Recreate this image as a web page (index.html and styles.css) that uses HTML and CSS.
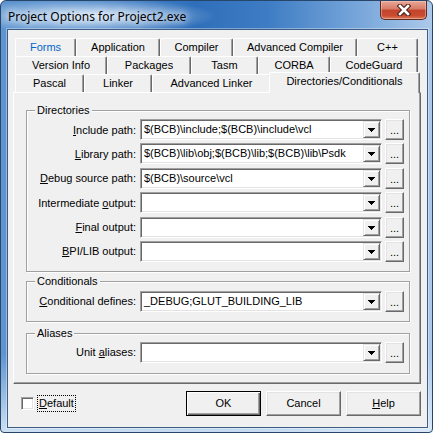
FILE: index.html
```html
<!DOCTYPE html>
<html>
<head>
<meta charset="utf-8">
<link rel="stylesheet" href="styles.css">
</head>
<body>
<div class="window">
  <div class="titlebar">
    <span class="title">Project Options for Project2.exe</span>
    <div class="close">
      <svg width="14" height="12" viewBox="0 0 14 12">
        <path d="M3 2 L11 10 M11 2 L3 10" stroke="#4a1c14" stroke-width="4.6" stroke-linecap="square" fill="none"/>
        <path d="M3 2 L11 10 M11 2 L3 10" stroke="#ffffff" stroke-width="2.6" stroke-linecap="square" fill="none"/>
      </svg>
    </div>
  </div>
  <div class="client">
    <div class="tabs">
      <div class="tabrow r1">
        <div class="tab hot">Forms</div>
        <div class="tab">Application</div>
        <div class="tab">Compiler</div>
        <div class="tab">Advanced Compiler</div>
        <div class="tab">C++</div>
      </div>
      <div class="tabrow r2">
        <div class="tab">Version Info</div>
        <div class="tab">Packages</div>
        <div class="tab">Tasm</div>
        <div class="tab">CORBA</div>
        <div class="tab">CodeGuard</div>
      </div>
      <div class="tabrow r3">
        <div class="tab">Pascal</div>
        <div class="tab">Linker</div>
        <div class="tab">Advanced Linker</div>
        <div class="tab sel">Directories/Conditionals</div>
      </div>
    </div>
    <div class="page">
      <div class="group">
        <div class="group-title">Directories</div>
        <div class="fields">
          <div class="field">
            <label><u>I</u>nclude path:</label>
            <div class="combo"><span class="val">$(BCB)\include;$(BCB)\include\vcl</span><span class="drop"><svg width="7" height="4" viewBox="0 0 7 4"><path d="M0 0h7v1h-1v1h-1v1h-1v1h-1v-1h-1v-1h-1v-1h-1z" fill="#000"/></svg></span></div>
            <div class="ell">...</div>
          </div>
          <div class="field">
            <label><u>L</u>ibrary path:</label>
            <div class="combo"><span class="val">$(BCB)\lib\obj;$(BCB)\lib;$(BCB)\lib\Psdk</span><span class="drop"><svg width="7" height="4" viewBox="0 0 7 4"><path d="M0 0h7v1h-1v1h-1v1h-1v1h-1v-1h-1v-1h-1v-1h-1z" fill="#000"/></svg></span></div>
            <div class="ell">...</div>
          </div>
          <div class="field">
            <label><u>D</u>ebug source path:</label>
            <div class="combo"><span class="val">$(BCB)\source\vcl</span><span class="drop"><svg width="7" height="4" viewBox="0 0 7 4"><path d="M0 0h7v1h-1v1h-1v1h-1v1h-1v-1h-1v-1h-1v-1h-1z" fill="#000"/></svg></span></div>
            <div class="ell">...</div>
          </div>
          <div class="field">
            <label>Intermediate <u>o</u>utput:</label>
            <div class="combo"><span class="val"></span><span class="drop"><svg width="7" height="4" viewBox="0 0 7 4"><path d="M0 0h7v1h-1v1h-1v1h-1v1h-1v-1h-1v-1h-1v-1h-1z" fill="#000"/></svg></span></div>
            <div class="ell">...</div>
          </div>
          <div class="field">
            <label><u>F</u>inal output:</label>
            <div class="combo"><span class="val"></span><span class="drop"><svg width="7" height="4" viewBox="0 0 7 4"><path d="M0 0h7v1h-1v1h-1v1h-1v1h-1v-1h-1v-1h-1v-1h-1z" fill="#000"/></svg></span></div>
            <div class="ell">...</div>
          </div>
          <div class="field">
            <label><u>B</u>PI/LIB output:</label>
            <div class="combo"><span class="val"></span><span class="drop"><svg width="7" height="4" viewBox="0 0 7 4"><path d="M0 0h7v1h-1v1h-1v1h-1v1h-1v-1h-1v-1h-1v-1h-1z" fill="#000"/></svg></span></div>
            <div class="ell">...</div>
          </div>
        </div>
      </div>
      <div class="group group-cond">
        <div class="group-title">Conditionals</div>
        <div class="fields">
          <div class="field">
            <label><u>C</u>onditional defines:</label>
            <div class="combo"><span class="val">_DEBUG;GLUT_BUILDING_LIB</span><span class="drop"><svg width="7" height="4" viewBox="0 0 7 4"><path d="M0 0h7v1h-1v1h-1v1h-1v1h-1v-1h-1v-1h-1v-1h-1z" fill="#000"/></svg></span></div>
            <div class="ell">...</div>
          </div>
        </div>
      </div>
      <div class="group group-alias">
        <div class="group-title">Aliases</div>
        <div class="fields">
          <div class="field">
            <label>Unit <u>a</u>liases:</label>
            <div class="combo"><span class="val"></span><span class="drop"><svg width="7" height="4" viewBox="0 0 7 4"><path d="M0 0h7v1h-1v1h-1v1h-1v1h-1v-1h-1v-1h-1v-1h-1z" fill="#000"/></svg></span></div>
            <div class="ell">...</div>
          </div>
        </div>
      </div>
    </div>
    <div class="footer">
      <div class="check">
        <span class="box"></span>
        <span class="focus"><u>D</u>efault</span>
      </div>
      <div class="buttons">
        <div class="btn default">OK</div>
        <div class="btn">Cancel</div>
        <div class="btn"><u>H</u>elp</div>
      </div>
    </div>
  </div>
</div>
</body>
</html>
```
FILE: styles.css
```css
* { box-sizing: border-box; }
html, body { margin: 0; padding: 0; }
body {
  width: 433px;
  height: 433px;
  overflow: hidden;
  background: #ffffff;
  font: 11px "Liberation Sans", Arial, sans-serif;
  color: #000;
}
.window {
  width: 433px;
  height: 433px;
  border: 1px solid #27466a;
  border-radius: 6px 6px 4px 4px;
  display: flex;
  flex-direction: column;
  padding: 0 4px 4px 6px;
  background:
    radial-gradient(ellipse 125px 18px at 90px 15px, rgba(228,239,251,0.95), rgba(228,239,251,0) 100%),
    linear-gradient(to bottom, rgba(255,255,255,0) 82%, rgba(225,238,250,0.85) 100%),
    linear-gradient(to right, #5f95d0 0%, #4a86c8 18%, #2f6fba 45%, #3e7dc4 62%, #80acdd 86%, #acc9ea 100%);
}
.titlebar {
  height: 28px;
  display: flex;
  align-items: flex-start;
  flex: none;
}
.title {
  margin: 7px 0 0 1px;
  line-height: 16px;
  font: 12px "Noto Sans", "DejaVu Sans", sans-serif;
  color: #000;
  text-shadow: 0 0 6px #e8f1fb, 0 0 10px #e8f1fb;
}
.close {
  margin-left: auto;
  margin-right: 1px;
  width: 47px;
  height: 19px;
  border: 1px solid #5d2a22;
  border-top: none;
  border-radius: 0 0 5px 5px;
  background: linear-gradient(to bottom, #e8a896 0%, #d77a66 45%, #c2442d 50%, #c84a30 80%, #dc7a58 100%);
  box-shadow: inset 0 0 0 1px rgba(255,210,200,0.45);
  display: flex;
  align-items: center;
  justify-content: center;
}
.client {
  flex: 1;
  border: 1px solid #3d5d84;
  box-shadow: 0 0 0 1px rgba(255,255,255,0.35);
  background: #f0f0f0;
  padding: 8px 6px 0 5px;
  display: flex;
  flex-direction: column;
}
.tabs {
  padding: 0 3px 0 2px;
}
.tabrow {
  display: grid;
  height: 18px;
}
.r1 { grid-template-columns: 61px 84px 73px 124px 61px; }
.r2 { grid-template-columns: 92px 84px 67px 72px 88px; }
.r3 { grid-template-columns: 69px 68px 119px 147px; }
.tab {
  border-top: 1px solid #fff;
  border-left: 1px solid #fff;
  border-right: 1px solid #696969;
  box-shadow: inset -1px 0 #a0a0a0;
  border-radius: 2px 2px 0 0;
  background: #f0f0f0;
  text-align: center;
  line-height: 16px;
  white-space: nowrap;
}
.tab.hot { color: #0066cc; }
.tab.sel {
  margin: -2px -2px -1px -2px;
  position: relative;
  z-index: 1;
  line-height: 17px;
}
.page {
  height: 292px;
  border-top: 1px solid #fff;
  border-left: 1px solid #fff;
  border-right: 1px solid #696969;
  border-bottom: 1px solid #696969;
  box-shadow: inset -1px -1px #a0a0a0;
  padding: 17px 10px 0 12px;
}
.group {
  border: 1px solid #a0a0a0;
  box-shadow: inset 1px 1px #fff, 1px 1px #fff;
  padding: 0 5px 9px 0;
  margin-bottom: 9px;
}
.group-alias { margin-top: 11px; padding-bottom: 10px; }
.group-title {
  width: fit-content;
  margin: -7px 0 0 8px;
  padding: 0 2px;
  background: #f0f0f0;
  line-height: 13px;
}
.fields {
  display: flex;
  flex-direction: column;
  gap: 3.4px;
  margin-top: 2px;
}
.group-cond .fields { margin-top: 3px; }
.field {
  display: flex;
  align-items: center;
  height: 21px;
}
.field label {
  flex: 1;
  text-align: right;
  padding-right: 4px;
  white-space: nowrap;
}
.combo {
  width: 242px;
  height: 21px;
  border: 1px solid;
  border-color: #a0a0a0 #fff #fff #a0a0a0;
  box-shadow: inset 1px 1px #696969, inset -1px -1px #e3e3e3;
  background: #fff;
  padding: 1px;
  display: flex;
}
.val {
  flex: 1;
  padding-left: 2px;
  line-height: 17px;
  white-space: nowrap;
  overflow: hidden;
}
.drop {
  width: 17px;
  height: 17px;
  border: 1px solid;
  border-color: #e3e3e3 #696969 #696969 #e3e3e3;
  box-shadow: inset 1px 1px #fff, inset -1px -1px #a0a0a0;
  background: #f0f0f0;
  display: flex;
  align-items: center;
  justify-content: center;
}
.drop svg { shape-rendering: crispEdges; margin-top: 1px; }
.ell {
  width: 19px;
  height: 21px;
  margin-left: 3px;
  border: 1px solid;
  border-color: #fff #696969 #696969 #fff;
  box-shadow: inset -1px -1px #a0a0a0, inset 1px 1px #e3e3e3;
  background: #f0f0f0;
  text-align: center;
  line-height: 20px;
}
.footer {
  display: flex;
  align-items: center;
  height: 25px;
  margin-top: 7px;
}
.check {
  display: flex;
  align-items: center;
  margin-left: 8px;
}
.box {
  width: 13px;
  height: 13px;
  border: 1px solid;
  border-color: #a0a0a0 #fff #fff #a0a0a0;
  box-shadow: inset 1px 1px #696969, inset -1px -1px #e3e3e3;
  background: #fff;
}
.focus {
  margin-left: 3px;
  border: 1px dotted #000;
  padding: 0 1px;
  line-height: 15px;
}
.buttons {
  margin-left: auto;
  display: flex;
  gap: 5px;
}
.btn {
  width: 75px;
  height: 25px;
  border: 1px solid;
  border-color: #fff #696969 #696969 #fff;
  box-shadow: inset -1px -1px #a0a0a0, inset 1px 1px #e3e3e3;
  background: #f0f0f0;
  text-align: center;
  line-height: 23px;
}
.btn.default {
  border-color: #000;
  box-shadow: inset 1px 1px #fff, inset -1px -1px #696969, inset -2px -2px #a0a0a0;
  line-height: 23px;
}
```
